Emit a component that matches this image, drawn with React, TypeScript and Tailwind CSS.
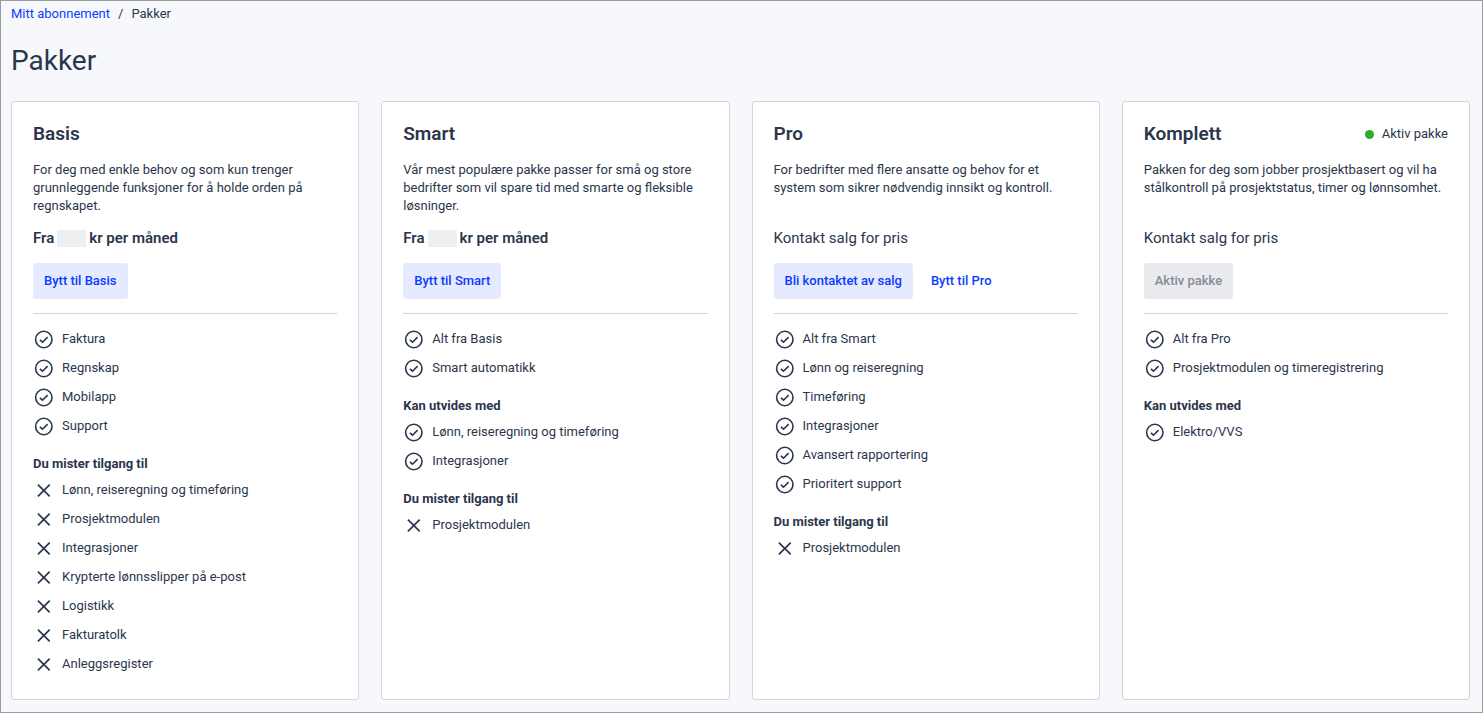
type Group = { title?: string; kind: "check" | "cross"; items: string[] };

type Plan = {
  name: string;
  description: string;
  hasPrice?: boolean;
  active?: boolean;
  actions: { label: string; variant: "secondary" | "text" | "disabled" }[];
  groups: Group[];
};

const plans: Plan[] = [
  {
    name: "Basis",
    description:
      "For deg med enkle behov og som kun trenger grunnleggende funksjoner for å holde orden på regnskapet.",
    hasPrice: true,
    actions: [{ label: "Bytt til Basis", variant: "secondary" }],
    groups: [
      { kind: "check", items: ["Faktura", "Regnskap", "Mobilapp", "Support"] },
      {
        title: "Du mister tilgang til",
        kind: "cross",
        items: [
          "Lønn, reiseregning og timeføring",
          "Prosjektmodulen",
          "Integrasjoner",
          "Krypterte lønnsslipper på e-post",
          "Logistikk",
          "Fakturatolk",
          "Anleggsregister",
        ],
      },
    ],
  },
  {
    name: "Smart",
    description:
      "Vår mest populære pakke passer for små og store bedrifter som vil spare tid med smarte og fleksible løsninger.",
    hasPrice: true,
    actions: [{ label: "Bytt til Smart", variant: "secondary" }],
    groups: [
      { kind: "check", items: ["Alt fra Basis", "Smart automatikk"] },
      {
        title: "Kan utvides med",
        kind: "check",
        items: ["Lønn, reiseregning og timeføring", "Integrasjoner"],
      },
      { title: "Du mister tilgang til", kind: "cross", items: ["Prosjektmodulen"] },
    ],
  },
  {
    name: "Pro",
    description:
      "For bedrifter med flere ansatte og behov for et system som sikrer nødvendig innsikt og kontroll.",
    actions: [
      { label: "Bli kontaktet av salg", variant: "secondary" },
      { label: "Bytt til Pro", variant: "text" },
    ],
    groups: [
      {
        kind: "check",
        items: [
          "Alt fra Smart",
          "Lønn og reiseregning",
          "Timeføring",
          "Integrasjoner",
          "Avansert rapportering",
          "Prioritert support",
        ],
      },
      { title: "Du mister tilgang til", kind: "cross", items: ["Prosjektmodulen"] },
    ],
  },
  {
    name: "Komplett",
    description:
      "Pakken for deg som jobber prosjektbasert og vil ha stålkontroll på prosjektstatus, timer og lønnsomhet.",
    active: true,
    actions: [{ label: "Aktiv pakke", variant: "disabled" }],
    groups: [
      { kind: "check", items: ["Alt fra Pro", "Prosjektmodulen og timeregistrering"] },
      { title: "Kan utvides med", kind: "check", items: ["Elektro/VVS"] },
    ],
  },
];

const buttonStyles = {
  secondary: "bg-[#e5eaff] text-[#0a3cff]",
  text: "text-[#0a3cff]",
  disabled: "bg-[#e9eaee] text-[#858b98]",
};

function CheckIcon() {
  return (
    <svg className="size-[22px] shrink-0" viewBox="0 0 22 22" fill="none" stroke="currentColor" strokeWidth="1.6" aria-hidden="true">
      <circle cx="10.8" cy="11.5" r="8.2" />
      <path d="M6.9 11.8l2.6 2.4 5.1-5.1" />
    </svg>
  );
}

function CrossIcon() {
  return (
    <svg className="size-[22px] shrink-0" viewBox="0 0 22 22" fill="none" stroke="currentColor" strokeWidth="1.7" aria-hidden="true">
      <path d="M4.9 5.6l11.8 11.8M16.7 5.6l-11.8 11.8" />
    </svg>
  );
}

function PlanCard({ plan }: { plan: Plan }) {
  return (
    <article className="rounded-[3px] border border-[#d3d5da] bg-white p-[21px]">
      <div className="flex items-center justify-between">
        <h2 className="text-[19px] leading-[22px] font-semibold">{plan.name}</h2>
        {plan.active && (
          <span className="flex items-center gap-2 text-[13px] leading-[18px]">
            <span className="size-[9px] rounded-full bg-[#2fac2f]" />
            Aktiv pakke
          </span>
        )}
      </div>
      <p className="mt-4 min-h-[54px] text-[13px] leading-[18px]">{plan.description}</p>

      {plan.hasPrice ? (
        <p className="mt-3 flex items-center text-[15px] leading-[22px] font-semibold">
          Fra
          <span className="mx-[3px] h-[17px] w-[29px] bg-[#eeeff0]" />
          kr per måned
        </p>
      ) : (
        <p className="mt-3 text-[15px] leading-[22px]">Kontakt salg for pris</p>
      )}

      <div className="mt-[14px] flex gap-[7px]">
        {plan.actions.map((action) => (
          <button
            key={action.label}
            type="button"
            disabled={action.variant === "disabled"}
            className={`h-9 rounded-[3px] px-[11px] text-[13px] leading-[18px] font-medium whitespace-nowrap ${buttonStyles[action.variant]}`}
          >
            {action.label}
          </button>
        ))}
      </div>

      <hr className="mt-[14px] mb-[10px] border-[#d3d5da]" />

      {plan.groups.map((group, i) => (
        <section key={i} className={i > 0 ? "mt-[15px]" : ""}>
          {group.title && (
            <h3 className="mb-[2px] text-[13px] leading-[18px] font-bold">{group.title}</h3>
          )}
          <ul>
            {group.items.map((item) => (
              <li key={item} className="flex h-[29px] items-center gap-[7px] text-[13px] leading-[18px]">
                {group.kind === "check" ? <CheckIcon /> : <CrossIcon />}
                {item}
              </li>
            ))}
          </ul>
        </section>
      ))}
    </article>
  );
}

export default function App() {
  return (
    <main className="min-h-screen border border-[#9c9ca0] bg-[#f7f8fc] pt-1 pr-3 pb-3 pl-[10px] font-['Roboto','Inter',sans-serif] text-[#2b364c]">
      <nav aria-label="Brødsmuler" className="flex gap-2 text-[13px] leading-[18px]">
        <a href="#abonnement" className="text-[#0a3cff]">
          Mitt abonnement
        </a>
        <span>/</span>
        <span>Pakker</span>
      </nav>
      <h1 className="mt-5 mb-[22px] text-[28px] leading-9">Pakker</h1>
      <div className="grid grid-cols-4 gap-[22px]">
        {plans.map((plan) => (
          <PlanCard key={plan.name} plan={plan} />
        ))}
      </div>
    </main>
  );
}
